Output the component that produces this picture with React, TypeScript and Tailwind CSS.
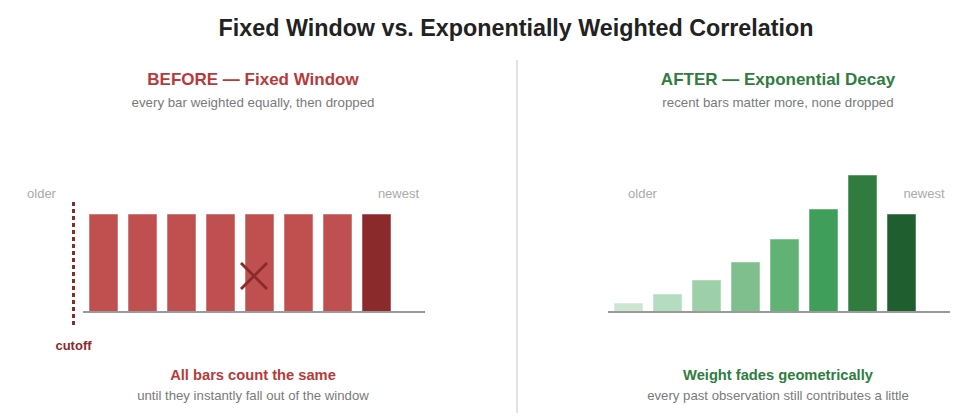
const GREENS = ['#cce6d2', '#b4dcbf', '#9dcfa9', '#7fbf8e', '#61b275', '#3f9e5a', '#2f7c3e', '#1f5e2e'];
const DECAY = [9, 18, 32, 50, 73, 103, 137, 98];

function PanelHeader({ title, sub, color }: { title: string; sub: string; color: string }) {
  return (
    <div className="flex flex-col items-center pt-[10px]">
      <h2 className={`text-[17px] leading-[20px] font-bold ${color}`}>{title}</h2>
      <p className="mt-[5px] text-[13.3px] leading-[16px] text-[#7a7a7a]">{sub}</p>
    </div>
  );
}

function PanelFooter({ title, sub, color }: { title: string; sub: string; color: string }) {
  return (
    <div className="flex flex-col items-center mt-[6px]">
      <p className={`text-[14.7px] leading-[18px] font-bold ${color}`}>{title}</p>
      <p className="mt-[4px] text-[13.2px] leading-[16px] text-[#7a7a7a]">{sub}</p>
    </div>
  );
}

function FixedChart() {
  return (
    <svg width="506" height="240" className="block">
      <text x="41.5" y="78" textAnchor="middle" fontSize="13" fill="#aaaaaa">older</text>
      <text x="398.5" y="78" textAnchor="middle" fontSize="13" fill="#aaaaaa">newest</text>
      {Array.from({ length: 8 }).map((_, i) => (
        <rect
          key={i}
          x={89 + 39 * i}
          y={94}
          width={29}
          height={98}
          fill={i === 7 ? '#8b2a2a' : '#c0504f'}
          stroke="#ffffff"
          strokeOpacity={0.5}
          strokeWidth={1}
        />
      ))}
      <line x1="83" y1="192" x2="425" y2="192" stroke="#9a9a9a" strokeWidth="2" />
      <line x1="73.5" y1="82" x2="73.5" y2="205" stroke="#8b2a2a" strokeWidth="3" strokeDasharray="4 3" />
      <line x1="241" y1="143" x2="267" y2="169" stroke="#8b2a2a" strokeWidth="3" />
      <line x1="267" y1="143" x2="241" y2="169" stroke="#8b2a2a" strokeWidth="3" />
      <text x="73.5" y="230" textAnchor="middle" fontSize="13" fontWeight="bold" fill="#8b2a2a">cutoff</text>
    </svg>
  );
}

function DecayChart() {
  return (
    <svg width="520" height="240" className="block">
      <text x="124.5" y="78" textAnchor="middle" fontSize="13" fill="#aaaaaa">older</text>
      <text x="406" y="78" textAnchor="middle" fontSize="13" fill="#aaaaaa">newest</text>
      {DECAY.map((h, i) => (
        <rect
          key={i}
          x={96 + 39 * i}
          y={192 - h}
          width={29}
          height={h}
          fill={GREENS[i]}
          stroke="#ffffff"
          strokeOpacity={0.5}
          strokeWidth={1}
        />
      ))}
      <line x1="90" y1="192" x2="432" y2="192" stroke="#9a9a9a" strokeWidth="2" />
    </svg>
  );
}

export default function App() {
  return (
    <div className="w-[979px] h-[419px] overflow-hidden bg-white font-['Liberation_Sans',Arial,sans-serif]">
      {/* title is centred on the full 1032px canvas, right edge is cropped */}
      <h1 className="w-[1032px] pt-[15px] text-center text-[23.3px] leading-[26px] font-bold text-[#222222]">
        Fixed Window vs. Exponentially Weighted Correlation
      </h1>
      <div className="flex mt-[19px]">
        <section className="w-[506px] shrink-0">
          <PanelHeader
            title="BEFORE — Fixed Window"
            sub="every bar weighted equally, then dropped"
            color="text-[#b83a3a]"
          />
          <div className="mt-[9px]">
            <FixedChart />
          </div>
          <PanelFooter
            title="All bars count the same"
            sub="until they instantly fall out of the window"
            color="text-[#b83a3a]"
          />
        </section>
        <div className="ml-[10px] w-[2px] h-[353px] shrink-0 bg-[#e2e2e2]" />
        <section className="w-[520px] shrink-0">
          <PanelHeader
            title="AFTER — Exponential Decay"
            sub="recent bars matter more, none dropped"
            color="text-[#2e7d3e]"
          />
          <div className="mt-[9px]">
            <DecayChart />
          </div>
          <PanelFooter
            title="Weight fades geometrically"
            sub="every past observation still contributes a little"
            color="text-[#2e7d3e]"
          />
        </section>
      </div>
    </div>
  );
}
